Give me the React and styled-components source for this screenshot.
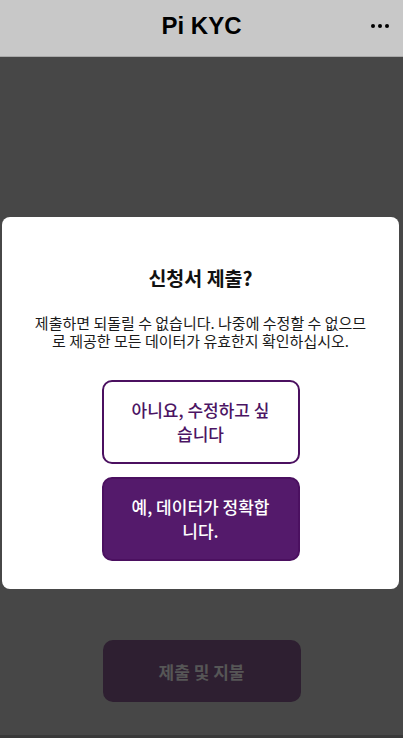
import React from "react";
import styled, { createGlobalStyle } from "styled-components";

const Global = createGlobalStyle`
  html, body { margin: 0; padding: 0; }
  body { font-family: "Noto Sans CJK KR", "Noto Sans", sans-serif; background: #474747; }
  * { box-sizing: border-box; }
`;

const Screen = styled.div`
  width: 403px;
  height: 738px;
  display: flex;
  flex-direction: column;
  overflow: hidden;
`;

const Header = styled.header`
  height: 57px;
  flex: none;
  background: #c8c8c8;
  border-bottom: 1px solid #a9a9a9;
  display: grid;
  grid-template-columns: 1fr auto 1fr;
  align-items: center;
`;

const Title = styled.h1`
  grid-column: 2;
  margin: 0;
  font-family: "Liberation Sans", Arial, sans-serif;
  font-weight: 700;
  font-size: 24px;
  color: #000;
  line-height: 1;
  padding-bottom: 5px;
`;

const MenuButton = styled.div`
  justify-self: end;
  padding-right: 14px;
  padding-bottom: 4px;
  display: flex;
  align-items: center;
  gap: 3px;
`;

const Dot = styled.span`
  width: 4px;
  height: 4px;
  border-radius: 50%;
  background: #000;
`;

const Main = styled.main`
  position: relative;
  flex: 1;
  background: #474747;
  display: flex;
  flex-direction: column;
  justify-content: flex-end;
  align-items: center;
  padding-bottom: 33px;
`;

const SubmitButton = styled.div`
  width: 198px;
  height: 62px;
  border-radius: 10px;
  background: #2e1f31;
  color: #565656;
  font-size: 17px;
  font-weight: 700;
  display: flex;
  align-items: center;
  justify-content: center;
`;

const BottomStrip = styled.div`
  height: 3px;
  flex: none;
  background: #393939;
`;

const Overlay = styled.div`
  position: absolute;
  inset: 0;
  display: flex;
  flex-direction: column;
  align-items: stretch;
  padding: 160px 4px 0 2px;
`;

const Modal = styled.section`
  background: #fff;
  border-radius: 8px;
  padding: 47px 29px 28px;
  display: flex;
  flex-direction: column;
  align-items: center;
`;

const ModalTitle = styled.h2`
  margin: 0;
  font-size: 19.5px;
  line-height: 28px;
  font-weight: 700;
  color: #111;
`;

const ModalText = styled.p`
  margin: 22px 0 0;
  font-size: 15px;
  line-height: 18px;
  color: #1a1a1a;
  text-align: center;
`;

const Actions = styled.div`
  margin-top: 30px;
  display: flex;
  flex-direction: column;
  gap: 13px;
`;

const ActionButton = styled.button`
  width: 198px;
  min-height: 84px;
  padding: 16px 22px;
  border-radius: 10px;
  border: 2px solid #4b1060;
  background: ${(p) => (p.$primary ? "#541a6b" : "#fff")};
  color: ${(p) => (p.$primary ? "#fff" : "#4b1463")};
  font-family: "Noto Sans CJK KR", "Noto Sans", sans-serif;
  font-size: 17px;
  font-weight: 500;
  line-height: 24px;
  text-align: center;
  cursor: pointer;
`;

export default function App() {
  return (
    <>
      <Global />
      <Screen>
        <Header>
          <Title>Pi KYC</Title>
          <MenuButton>
            <Dot />
            <Dot />
            <Dot />
          </MenuButton>
        </Header>
        <Main>
          <SubmitButton>제출 및 지불</SubmitButton>
          <Overlay>
            <Modal>
              <ModalTitle>신청서 제출?</ModalTitle>
              <ModalText>
                제출하면 되돌릴 수 없습니다. 나중에 수정할 수 없으므로 제공한 모든 데이터가 유효한지 확인하십시오.
              </ModalText>
              <Actions>
                <ActionButton>아니요, 수정하고 싶습니다</ActionButton>
                <ActionButton $primary>예, 데이터가 정확합니다.</ActionButton>
              </Actions>
            </Modal>
          </Overlay>
        </Main>
        <BottomStrip />
      </Screen>
    </>
  );
}
